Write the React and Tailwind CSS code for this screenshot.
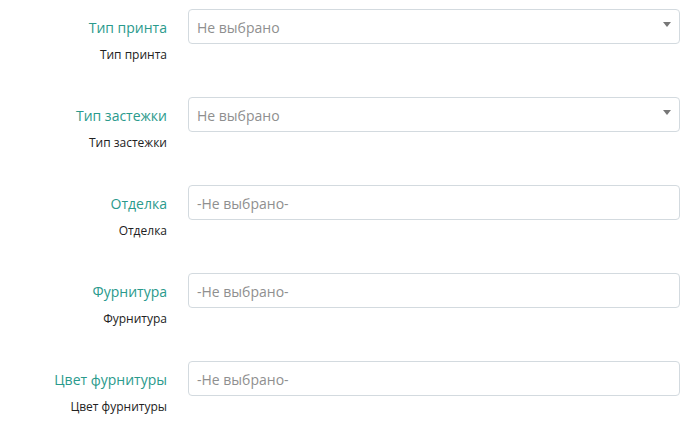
export default function App() {
  const rows = [
    { label: "Тип принта", select: true, text: "Не выбрано" },
    { label: "Тип застежки", select: true, text: "Не выбрано" },
    { label: "Отделка", select: false, text: "-Не выбрано-" },
    { label: "Фурнитура", select: false, text: "-Не выбрано-" },
    { label: "Цвет фурнитуры", select: false, text: "-Не выбрано-" },
  ];
  return (
    <div className="w-[692px] h-[425px] bg-white overflow-hidden" style={{ fontFamily: '"Open Sans", sans-serif' }}>
      {rows.map((r, i) => (
        <div key={i} className="flex h-[88px] pt-[9px]">
          <div className="w-[188px] pr-[21px] pt-[1px] flex flex-col items-end">
            <div className="text-[14px] leading-[35px] text-[#2a9a8c]">{r.label}</div>
            <div className="text-[12px] leading-[16px] mt-[2px] text-[#222]">{r.label}</div>
          </div>
          <div className="relative w-[492px] h-[35px] border border-[#d3dadf] rounded-[4px] flex items-center pl-[8px] pt-[2px] text-[14px] text-[#8f8f8f]">
            {r.text}
            {r.select && (
              <div className="absolute right-[8px] top-[12px] w-0 h-0 border-l-[4px] border-r-[4px] border-t-[5px] border-l-transparent border-r-transparent border-t-[#777]" />
            )}
          </div>
        </div>
      ))}
    </div>
  );
}
